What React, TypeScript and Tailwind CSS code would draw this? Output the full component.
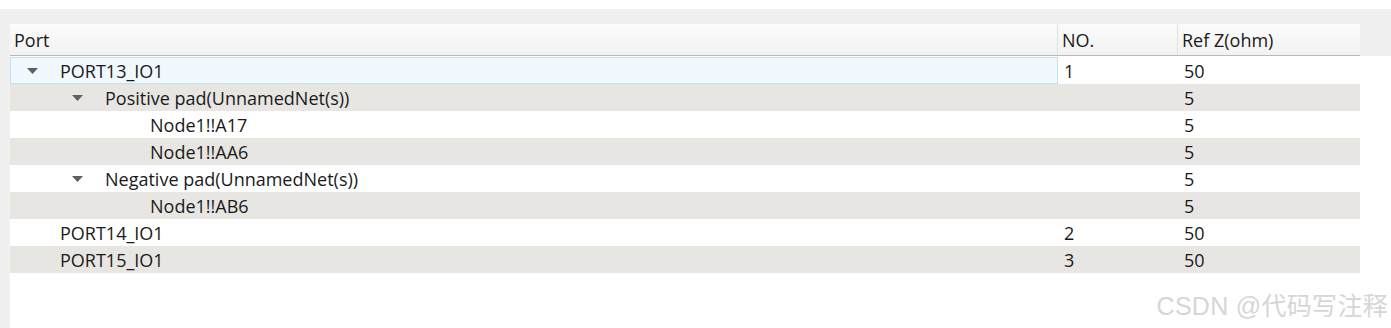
import { type ReactNode } from 'react';

type Row = {
  label: string;
  level: number;
  expandable?: boolean;
  no?: string;
  refZ: string;
  selected?: boolean;
};

const rows: Row[] = [
  { label: 'PORT13_IO1', level: 0, expandable: true, no: '1', refZ: '50', selected: true },
  { label: 'Positive pad(UnnamedNet(s))', level: 1, expandable: true, refZ: '5' },
  { label: 'Node1!!A17', level: 2, refZ: '5' },
  { label: 'Node1!!AA6', level: 2, refZ: '5' },
  { label: 'Negative pad(UnnamedNet(s))', level: 1, expandable: true, refZ: '5' },
  { label: 'Node1!!AB6', level: 2, refZ: '5' },
  { label: 'PORT14_IO1', level: 0, no: '2', refZ: '50' },
  { label: 'PORT15_IO1', level: 0, no: '3', refZ: '50' },
];

const indents = ['pl-[45px]', 'pl-[90px]', 'pl-[135px]'];

function Caret() {
  return (
    <svg width="11" height="6" viewBox="0 0 11 6" className="block">
      <path d="M0 0 L11 0 L5.5 6 Z" fill="#5f5f5f" />
    </svg>
  );
}

function HeaderCell({ children, className }: { children: ReactNode; className: string }) {
  return <div className={`flex items-center px-1 ${className}`}>{children}</div>;
}

export default function App() {
  return (
    <div
      className="relative w-[1391px] h-[328px] bg-white overflow-hidden text-[18px] leading-none text-[#1a1a1a]"
      style={{ fontFamily: '"Segoe UI", "Open Sans", "Noto Sans", sans-serif' }}
    >
      <div className="mt-[9px] h-[319px] bg-[#f0f0f0] pl-[10px] pt-[15px] flex flex-col">
        {/* header */}
        <div className="flex h-[32px] w-[1350px] bg-gradient-to-b from-[#fbfbfb] to-[#f2f2f2] border-b border-[#b9b9b9]">
          <HeaderCell className="w-[1048px] border-r border-[#e2e2e2]">Port</HeaderCell>
          <HeaderCell className="w-[120px] border-r border-[#e2e2e2]">NO.</HeaderCell>
          <HeaderCell className="flex-1">Ref Z(ohm)</HeaderCell>
        </div>
        {/* body */}
        <div className="flex-1 bg-white pt-[1px]">
          {rows.map((r, i) => (
            <div
              key={i}
              className={`flex h-[27px] w-[1350px] ${i % 2 === 1 ? 'bg-[#e8e6e3]' : 'bg-white'}`}
            >
              <div className="w-[1048px] flex items-center relative">
                {r.expandable && (
                  <div
                    className={`absolute top-[11px] ${r.level === 0 ? 'left-[17px]' : 'left-[62px]'}`}
                  >
                    <Caret />
                  </div>
                )}
                <div
                  className={`h-full flex items-center flex-1 ${indents[r.level]} ${
                    r.selected ? 'bg-[#f1f8fe] border border-[#c4dff4]' : ''
                  }`}
                >
                  <span className={r.selected ? 'pl-[4px]' : 'pl-[5px]'}>{r.label}</span>
                </div>
              </div>
              <div className="w-[120px] flex items-center pl-[6px]">{r.no}</div>
              <div className="flex-1 flex items-center pl-[6px]">{r.refZ}</div>
            </div>
          ))}
        </div>
      </div>
      <div
        className="absolute right-[3px] bottom-[9px] text-[25px] leading-none text-[#d6d6d6] tracking-[0.3px]"
        style={{ fontFamily: '"Liberation Sans", "Noto Sans CJK SC", sans-serif' }}
      >
        CSDN @代码写注释
      </div>
    </div>
  );
}
